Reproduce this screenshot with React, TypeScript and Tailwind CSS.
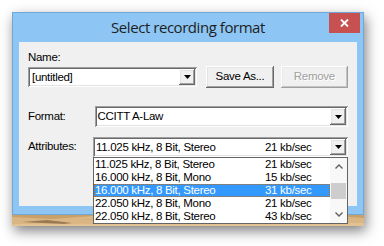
import React from "react";

const raised =
  "shadow-[inset_-1px_-1px_0_#696969,inset_1px_1px_0_#ffffff,inset_-2px_-2px_0_#a0a0a0,inset_2px_2px_0_#e3e3e3]";
const raisedDisabled =
  "shadow-[inset_-1px_-1px_0_#a0a0a0,inset_1px_1px_0_#ffffff,inset_-2px_-2px_0_#c4c4c4,inset_2px_2px_0_#e9e9e9]";
const sunken =
  "shadow-[inset_1px_1px_0_#a0a0a0,inset_-1px_-1px_0_#ffffff,inset_2px_2px_0_#696969,inset_-2px_-2px_0_#e3e3e3]";

function DropBtn() {
  return (
    <div className={`w-[16px] h-full bg-[#f0f0f0] flex items-center justify-center ${raised}`}>
      <svg width="7" height="4" viewBox="0 0 7 4">
        <path d="M0 0H7L3.5 4Z" fill="#000" />
      </svg>
    </div>
  );
}

const rows = [
  ["11.025 kHz, 8 Bit, Stereo", "21 kb/sec"],
  ["16.000 kHz, 8 Bit, Mono", "15 kb/sec"],
  ["16.000 kHz, 8 Bit, Stereo", "31 kb/sec"],
  ["22.050 kHz, 8 Bit, Mono", "21 kb/sec"],
  ["22.050 kHz, 8 Bit, Stereo", "43 kb/sec"],
];

export default function App() {
  return (
    <div className="w-[384px] h-[246px] bg-white overflow-hidden relative font-['Liberation_Sans',Arial,sans-serif] text-[11.5px] tracking-[-0.3px] text-black">
      <div className="ml-[12px] mt-[12px] w-[352px] flex flex-col shadow-[2px_5px_12px_rgba(0,0,0,0.5)]">
        {/* window frame */}
        <div className="border border-[#6fa7d8] bg-[#8dc6f4] flex flex-col">
          {/* title bar */}
          <div className="h-[29px] grid grid-cols-[1fr_auto_1fr]">
            <div />
            <div className="self-center font-['Open_Sans',sans-serif] text-[15px] tracking-[-0.45px] text-[#1e1e1e] leading-[20px] pb-[1px]">
              Select recording format
            </div>
            <div className="flex justify-end items-start pr-[3px]">
              <div className="w-[31px] h-[20px] bg-[#c75050] flex items-center justify-center">
                <svg width="9" height="8" viewBox="0 0 9 8">
                  <path d="M1 0.5L8 7.5M8 0.5L1 7.5" stroke="#fff" strokeWidth="1.8" />
                </svg>
              </div>
            </div>
          </div>
          {/* client area */}
          <div className="mx-[6px] h-[164px] bg-[#f0f0f0] pt-[9px] px-[9px] flex flex-col">
            <div className="h-[13px] leading-[13px]">Name:</div>
            <div className="mt-[2px] h-[22px] flex items-center">
              <div className={`w-[171px] h-[20px] bg-white p-[2px] flex ${sunken}`}>
                <div className="flex-1 pl-[2px] leading-[16px]">[untitled]</div>
                <DropBtn />
              </div>
              <div className={`ml-[9px] w-[68px] h-[22px] bg-[#f0f0f0] flex items-center justify-center ${raised}`}>
                Save As...
              </div>
              <div
                className={`ml-[7px] w-[68px] h-[22px] bg-[#f0f0f0] flex items-center justify-center text-[#a0a0a0] [text-shadow:1px_1px_0_#ffffff] ${raisedDisabled}`}
              >
                Remove
              </div>
            </div>
            <div className="mt-[18px] h-[21px] flex items-center">
              <div className="w-[67px]">Format:</div>
              <div className={`w-[255px] h-[21px] bg-white p-[2px] flex ${sunken}`}>
                <div className="flex-1 pl-[1px] leading-[17px]">CCITT A-Law</div>
                <DropBtn />
              </div>
            </div>
            <div className="mt-[10px] h-[20px] flex items-center">
              <div className="w-[67px]">Attributes:</div>
              <div className="relative">
                <div className={`w-[255px] h-[20px] bg-white p-[2px] flex ${sunken}`}>
                  <div className="flex-1 pl-[1px] leading-[16px] flex">
                    <span className="w-[169px]">11.025 kHz, 8 Bit, Stereo</span>
                    <span>21 kb/sec</span>
                  </div>
                  <DropBtn />
                </div>
                {/* dropdown list */}
                <div className="absolute left-0 top-full w-[255px] h-[67px] border border-[#646464] bg-white flex z-10">
                  <div className="flex-1 flex flex-col">
                    {rows.map(([a, b], i) => (
                      <div
                        key={i}
                        className={
                          i === 2
                            ? "h-[13px] leading-[11px] flex bg-[#3399ff] text-white border border-dotted border-[#cc6600]"
                            : "h-[13px] leading-[13px] flex px-[1px]"
                        }
                      >
                        <span className="w-[170px]">{a}</span>
                        <span>{b}</span>
                      </div>
                    ))}
                  </div>
                  <div className="w-[17px] bg-[#f8f8f8] flex flex-col items-center">
                    <div className="h-[17px] flex items-center justify-center">
                      <svg width="8" height="5" viewBox="0 0 8 5">
                        <path d="M0.5 4.5L4 1L7.5 4.5" stroke="#606060" strokeWidth="1.4" fill="none" />
                      </svg>
                    </div>
                    <div className="mt-[8px] w-[15px] h-[16px] bg-[#cdcdcd]" />
                    <div className="flex-1" />
                    <div className="h-[17px] flex items-center justify-center">
                      <svg width="8" height="5" viewBox="0 0 8 5">
                        <path d="M0.5 0.5L4 4L7.5 0.5" stroke="#606060" strokeWidth="1.4" fill="none" />
                      </svg>
                    </div>
                  </div>
                </div>
              </div>
            </div>
          </div>
          <div className="h-[8px]" />
        </div>
        {/* desktop wallpaper strip */}
        <div className="h-[11px] w-full bg-[#d8b482]">
          <svg width="352" height="11" viewBox="0 0 352 11" className="block">
            <rect width="352" height="11" fill="#d9b684" />
            <path d="M0 2 L40 4 L80 1 L120 5 L160 3 L200 6 L240 2 L280 4 L320 1 L352 3 V0 H0Z" fill="#c99f6a" />
            <path d="M10 7 L35 5 L60 8 L52 9 Z" fill="#6e4f33" opacity="0.6" />
            <path d="M70 4 L95 6 L120 5 L100 7 Z" fill="#8a6540" opacity="0.6" />
            <path d="M130 8 L170 6 L190 9 Z" fill="#7a5738" opacity="0.5" />
            <path d="M210 5 L240 7 L260 6 L235 8 Z" fill="#8a6540" opacity="0.5" />
            <path d="M270 8 L300 5 L330 7 L310 9 Z" fill="#6e4f33" opacity="0.5" />
            <path d="M0 9 L352 8 V11 H0Z" fill="#e6c79a" opacity="0.7" />
          </svg>
        </div>
      </div>
    </div>
  );
}
